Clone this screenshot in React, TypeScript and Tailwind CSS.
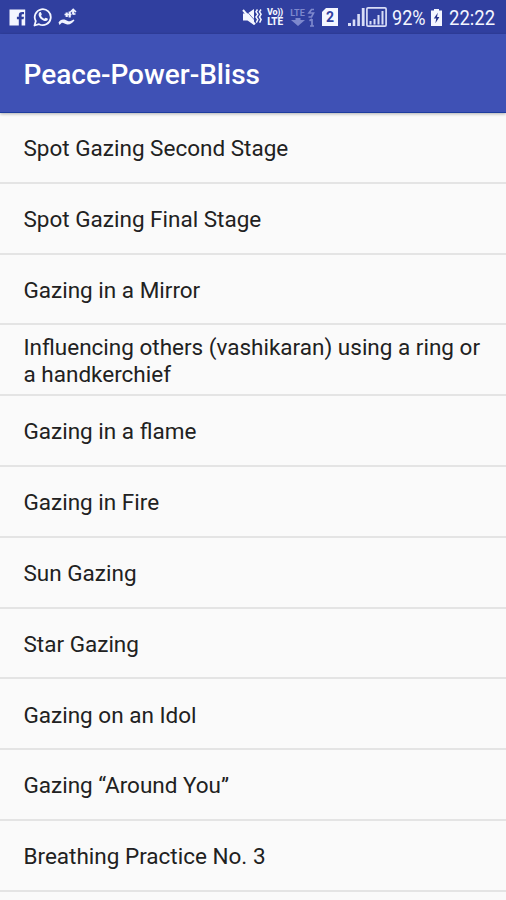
import React from "react";

const items: string[] = [
  "Spot Gazing Second Stage",
  "Spot Gazing Final Stage",
  "Gazing in a Mirror",
  "Influencing others (vashikaran) using a ring or a handkerchief",
  "Gazing in a flame",
  "Gazing in Fire",
  "Sun Gazing",
  "Star Gazing",
  "Gazing on an Idol",
  "Gazing “Around You”",
  "Breathing Practice No. 3",
];

function FacebookIcon() {
  return (
    <svg className="h-[17px] w-[17px]" viewBox="0 0 17 17">
      <path
        fill="#f4f6ff"
        d="M.5 .5h15.700v16H12.600v-6.300h2l.4-2.400h-2.400V6.400c0-.8.3-1.200 1.200-1.200H15V3h-1.800C10.900 3 9.800 4.200 9.800 6.200V7.800H7.900v2.400h1.900v6.300H.5z"
      />
    </svg>
  );
}

function WhatsAppIcon() {
  return (
    <svg className="h-[20px] w-[20px]" viewBox="0 0 20 20" fill="none">
      <path d="M1.500 18.500l1.300-4.400a8 8 0 1 1 3.200 3.100z" stroke="#f4f6ff" strokeWidth="1.800" strokeLinejoin="round" />
      <path
        fill="#f4f6ff"
        d="M6.600 5.300c.5-.5 1.200-.4 1.400.1l.8 1.800c.1.400-.7 1.200-.7 1.500.6 1.400 1.700 2.400 3.200 3 .4.100 1-1.100 1.400-1l1.900.9c.5.300.2 1.200-.2 1.700-.8.900-2.200 1-3.600.4-2.500-1-4.300-2.900-5-5-.4-1.400 0-2.600.8-3.400z"
      />
    </svg>
  );
}

function HandShareIcon() {
  return (
    <svg className="h-[18px] w-[20px]" viewBox="0 0 20 18" fill="none" stroke="#f0f3ff">
      <path fill="#f0f3ff" stroke="none" d="M.5 14.500c1.500-2.400 3.500-3.600 6-2.900l3.300 1.500c2 .6 3.600-.4 5.700-1.600l1 .8c-2 2.900-4.400 4.500-7.300 4.200-2.400-.4-3.900-2.200-5.700-1.600L1.500 17z" />
      <path d="M8.700 4.500v4.500M11.700 3.500v6M15.200 2v4.500" strokeWidth="2.200" />
      <path d="M6.500 6.500h7M12.500 4L15.200 1.300 18 4M15 6h2.500" strokeWidth="1.600" />
    </svg>
  );
}

function MuteVibrateIcon() {
  return (
    <svg className="h-[18px] w-[20px]" viewBox="0 0 20 18" fill="none" stroke="#f4f6ff">
      <path fill="#f4f6ff" stroke="none" d="M1 5.500h4.500L12 1v16l-6.500-4.500H1z" />
      <path d="M4 2.500l9 10" stroke="#303f9f" strokeWidth=".7" />
      <path d="M1 2l12 14.300" strokeWidth="2" />
      <path d="M15.500 1.500l-1.500 2.300 1.800 2.500-1.800 2.700 1.800 2.600-1.500 3M19 1.500l-1.500 2.300 1.600 2.500-1.600 2.700 1.600 2.600-1.500 3" strokeWidth="1.500" />
    </svg>
  );
}

function DataIcon() {
  return (
    <div className="flex h-[19px] w-[26px] justify-between text-[#7d88cd]">
      <div className="flex w-[17px] flex-col items-center">
        <span className="text-[9px] leading-[10px] font-bold">LTE</span>
        <svg className="h-[8px] w-[14px]" viewBox="0 0 14 8" fill="currentColor">
          <path d="M4.500 0h5v2H14L7 8 0 2h4.500z" />
        </svg>
      </div>
      <svg className="h-[19px] w-[8px]" viewBox="0 0 8 19" fill="none" stroke="currentColor" strokeWidth="1.700">
        <path d="M7 1.500H4.500L2 5h4.500L4.500 9H1.500M5 11v7M2.500 12.800L5 11M3 18h4" />
      </svg>
    </div>
  );
}

function SimIcon() {
  return (
    <div className="flex h-[18px] w-[16px] items-center justify-center bg-[#f4f6ff] text-[14px] leading-[18px] font-bold text-[#303f9f] [clip-path:polygon(25%_0,100%_0,100%_100%,0_100%,0_22%)]">
      2
    </div>
  );
}

function SignalIcon() {
  return (
    <svg className="h-[18px] w-[17px]" viewBox="0 0 17 18" fill="#d8ddf7">
      <path d="M0 15h3v3H0zM4.700 11.500h2.600V18H4.700zM9.300 6h2.600v12H9.300zM13.800 0h2.800v18h-2.800z" />
    </svg>
  );
}

function BoxedSignalIcon() {
  return (
    <svg className="h-[20px] w-[21px]" viewBox="0 0 21 20">
      <rect x=".9" y=".9" width="19.200" height="18.200" rx="1.200" fill="none" stroke="#d8ddf7" strokeWidth="1.700" />
      <path fill="#d8ddf7" d="M3.500 14h2v3.500h-2zM7.500 12h2v5.500h-2zM11.500 8h2v9.500h-2zM15.500 4h2v13.500h-2z" />
    </svg>
  );
}

function BatteryIcon() {
  return (
    <svg className="h-[17px] w-[11px]" viewBox="0 0 11 17">
      <path fill="#f4f6ff" d="M3 0h5v1.500h3V17H0V1.500h3z" />
      <path fill="#25318b" d="M6.800 3.800L2.800 9.500h2.400l-.8 4.700L8.400 8H6z" />
    </svg>
  );
}

function StatusBar() {
  return (
    <div className="flex h-[34px] shrink-0 items-center bg-[#303f9f] text-[#f4f6ff]">
      <div className="ml-[9px] flex items-center">
        <FacebookIcon />
        <div className="ml-[7px]"><WhatsAppIcon /></div>
        <div className="ml-[5px]"><HandShareIcon /></div>
      </div>
      <div className="ml-auto flex items-center">
        <MuteVibrateIcon />
        <div className="ml-[4px] flex w-[18px] flex-col items-center font-extrabold">
          <span className="text-[9px] leading-[9px] tracking-[-0.3px]">Vo))</span>
          <span className="text-[10px] leading-[10px] tracking-[-0.2px]">LTE</span>
        </div>
        <div className="ml-[5px]"><DataIcon /></div>
        <div className="ml-[7px]"><SimIcon /></div>
        <div className="ml-[10px]"><SignalIcon /></div>
        <div className="ml-[1px]"><BoxedSignalIcon /></div>
        <div className="ml-[5px] w-[34px] pt-[1px]">
          <span className="block w-[42px] origin-left scale-x-[0.86] text-[21px] leading-6">92%</span>
        </div>
        <div className="ml-[5px]"><BatteryIcon /></div>
        <div className="mr-[11px] ml-[7px] w-[46px] pt-[1px]">
          <span className="block w-[53px] origin-left scale-x-[0.88] text-[21px] leading-6">22:22</span>
        </div>
      </div>
    </div>
  );
}

export default function App() {
  return (
    <div className="flex h-[900px] w-[506px] flex-col overflow-hidden bg-[#fafafa] font-[Roboto,sans-serif]">
      <StatusBar />
      <header className="z-10 flex h-[78.500px] shrink-0 items-center border-b border-[#1d3c9e] bg-[#3f51b5] pl-[23.500px] shadow-[0_1px_3px_rgba(0,0,0,0.3)]">
        <h1 className="pt-[5px] text-[28px] leading-8 font-medium text-white">Peace-Power-Bliss</h1>
      </header>
      <ul className="shrink-0 pt-[0.5px]">
        {items.map((item) => (
          <li key={item} className="flex h-[70.800px] items-center border-b-2 border-[#e4e4e4] pt-[2px] pr-5 pl-[23.500px] text-[22.500px] leading-[26.400px] text-[#212121]">
            {item}
          </li>
        ))}
      </ul>
    </div>
  );
}
